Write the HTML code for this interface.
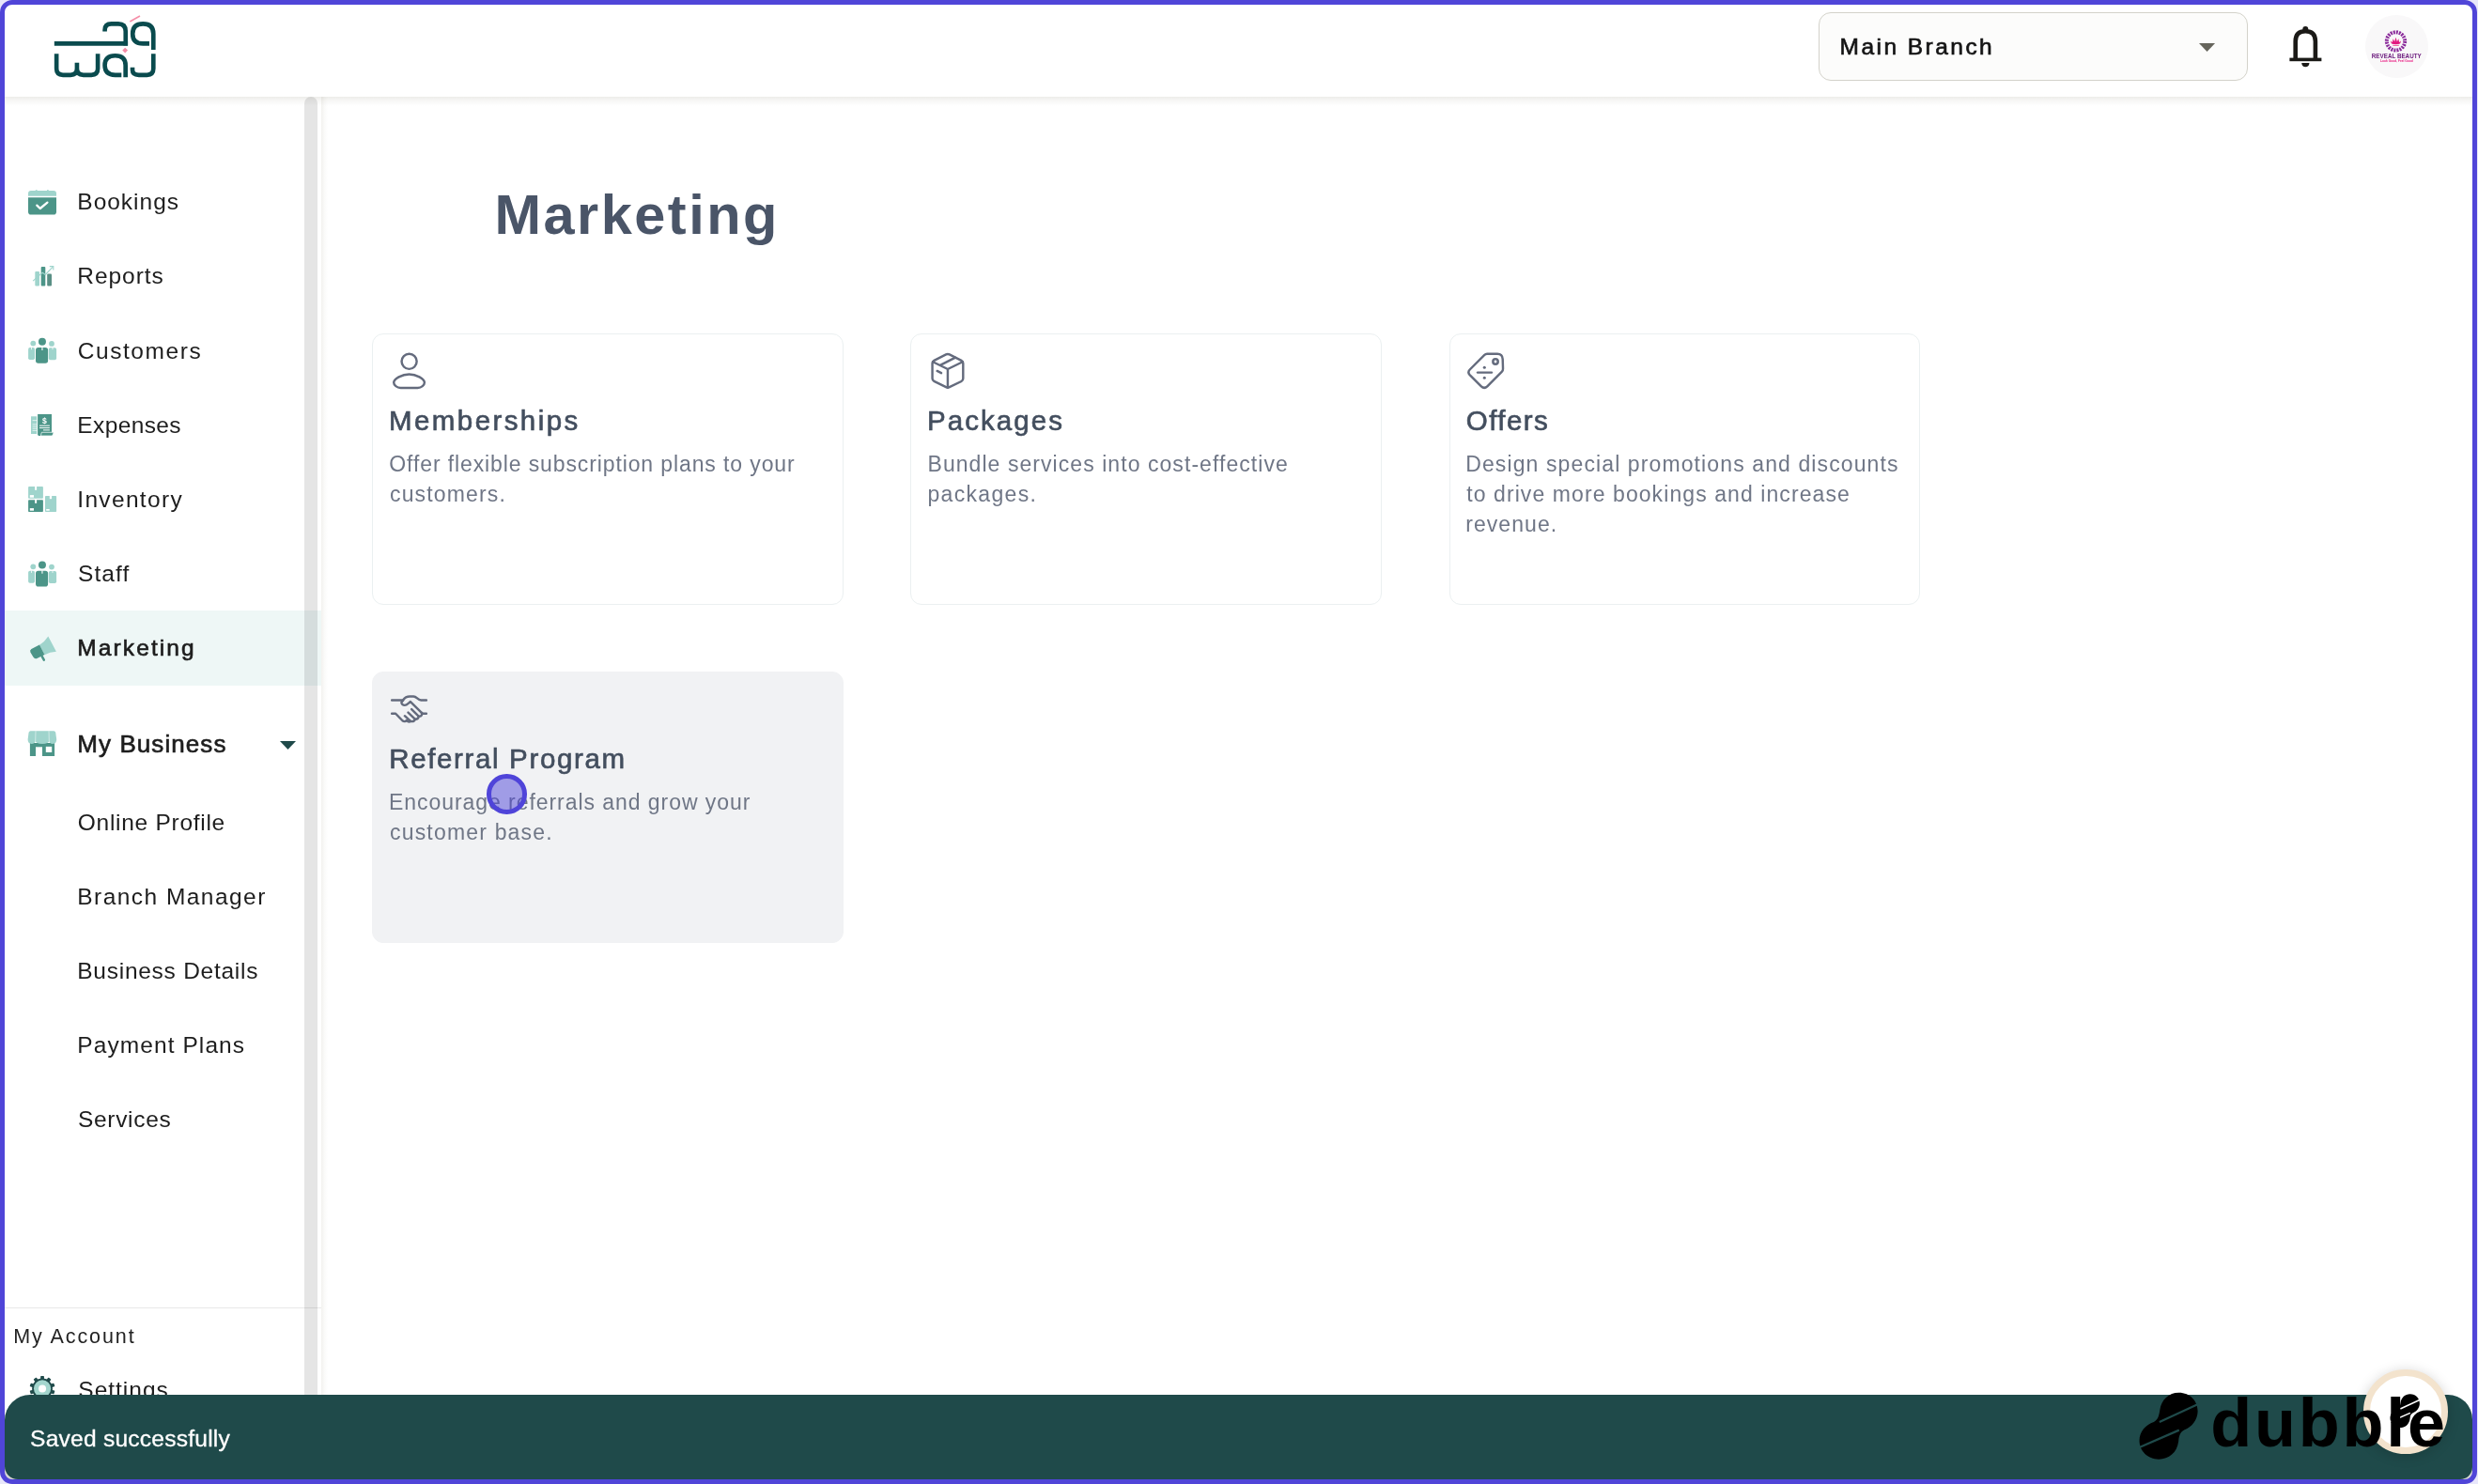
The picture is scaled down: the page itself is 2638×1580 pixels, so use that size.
<!DOCTYPE html>
<html lang="en"><head><meta charset="utf-8"><title>Marketing</title>
<style>
*{box-sizing:border-box;margin:0;padding:0}
html,body{width:2638px;height:1580px;overflow:hidden;background:#e8e7fa}
body{position:relative;font-family:"Liberation Sans",sans-serif}
.abs{position:absolute}
.t{position:absolute;white-space:pre;line-height:1;font-family:"Liberation Sans",sans-serif}
#page{position:absolute;left:0;top:0;width:2637px;height:1580px;background:#fff;border-radius:13px;overflow:hidden}
#frame{position:absolute;left:0;top:0;width:2637px;height:1580px;border:5px solid #5045d8;border-radius:13px;z-index:100;pointer-events:none}
#header{position:absolute;left:0;top:0;width:2638px;height:103px;background:#fff;z-index:20}
#hshadow{position:absolute;left:0;top:103px;width:2638px;height:10px;background:linear-gradient(rgba(45,40,10,.085),rgba(45,40,10,.035) 45%,rgba(45,40,10,0));z-index:19}
#sbshadow{position:absolute;left:342px;top:103px;width:7px;height:1477px;background:linear-gradient(90deg,#f3f2ef,#fbfbfa 55%,#fff);z-index:5}
#sidebar{position:absolute;left:0;top:103px;width:342px;height:1477px;background:#fff;z-index:6}
#hl{position:absolute;left:0;top:650px;width:342px;height:79.5px;background:#eef7f6;z-index:7}
#thumb{position:absolute;left:324px;top:103px;width:14px;height:1400px;background:rgba(0,0,0,.102);border-radius:7px 7px 0 0;z-index:30}
#divider{position:absolute;left:0;top:1391.5px;width:342px;height:1.5px;background:#e8e8e8;z-index:8}
.card{position:absolute;width:501px;height:289px;border:1px solid #ebf0f1;border-radius:12px;background:#fff}
.card.hover{background:#f1f2f4;border-color:#f1f2f4}
#select{position:absolute;left:1936px;top:13px;width:457px;height:72.5px;border:1.3px solid #d3d2ca;border-radius:13px;background:#fcfcfb;z-index:21}
#avatar{position:absolute;left:2518px;top:16px;width:67px;height:67px;border-radius:50%;background:#f9f8f9;z-index:21}
#toast{position:absolute;left:5px;top:1485px;width:2627px;height:90px;background:#1f4a4a;border-radius:27px 26px 13px 14px;z-index:40}
#fab{position:absolute;left:2516px;top:1458px;width:89.5px;height:89.5px;border-radius:50%;background:#fff;border:7px solid #f3e3cd;box-shadow:0 2px 14px rgba(0,0,0,.18);z-index:41}
#cursor{position:absolute;left:518.2px;top:824.2px;width:42.6px;height:42.6px;border-radius:50%;background:rgba(80,69,216,.5);border:5px solid #4f44d9;z-index:35}
svg{position:absolute;overflow:visible}
.wedge{position:absolute;top:1559px;width:16px;height:16px;background:#d9d9d4;z-index:39}

</style></head>
<body>
<div id="page">
<div id="header"></div>
<div id="hshadow"></div>
<div id="sbshadow"></div>
<div id="sidebar"></div>
<div id="hl"></div>
<div id="divider"></div>
<div id="thumb"></div>
<div id="select"></div>
<div id="avatar"></div>
<div class="card" style="left:396px;top:355px;width:502px"></div>
<div class="card" style="left:969px;top:355px;width:502px"></div>
<div class="card" style="left:1543px;top:355px"></div>
<div class="card hover" style="left:396px;top:715px;width:502px"></div>
<!-- LOGO -->
<svg style="left:0;top:0;z-index:23" width="240" height="110" viewBox="0 0 240 110" role="img" aria-label="waj وجـ logo"><title>waj وجـ</title>
<g transform="scale(0.096852)" fill="none" stroke="#0a4b4e" stroke-width="48" stroke-linecap="butt" stroke-linejoin="round">
<path d="M597,479 H1405"/>
<path d="M1152,347 V330 Q1152,262 1225,262 H1300 Q1381,262 1381,345 V500"/>
<path d="M1642,479 H1572 Q1458,479 1458,371 Q1458,262 1572,262 Q1686,262 1686,371 V546"/>
<path d="M621,590 V755 Q621,824 692,824 H775 Q846,824 846,755 V690 M846,755 Q846,824 917,824 H1004 Q1075,824 1075,755 V590"/>
<path d="M1335,824 H1266 Q1152,824 1152,718 Q1152,612 1266,612 Q1380,612 1380,718 V848"/>
<path d="M1686,590 V755 Q1686,824 1616,824 H1526 Q1456,824 1456,770 V740"/>
<path d="M1428,238 L1538,176" stroke="#f58ea8" stroke-width="17"/>
<path d="M1375,523 L1405,553 L1375,583 L1345,553 Z" fill="#f58ea8" stroke="none"/>
</g></svg>

<!-- SIDEBAR ICONS -->
<svg style="left:0;top:0;z-index:23" width="70" height="1580" viewBox="0 0 70 1580">
<!-- calendar -->
<g>
<path d="M30,208.7 V206 Q30,203 33,203 H57 Q60,203 60,206 V208.7 Z" fill="#9fd4cc"/>
<rect x="37.8" y="202.2" width="1.8" height="1.5" fill="#9fd4cc"/><rect x="50" y="202.2" width="1.8" height="1.5" fill="#9fd4cc"/>
<path d="M30,210.2 H60 V225.5 Q60,228.6 57,228.6 H33 Q30,228.6 30,225.5 Z" fill="#4c9588"/>
<path d="M39.3,218.6 L42.7,222 L50.4,215.6" fill="none" stroke="#fff" stroke-width="2.3" stroke-linecap="round" stroke-linejoin="round"/>
</g>
<!-- reports -->
<g>
<rect x="37.3" y="289" width="4.7" height="15.4" rx="1" fill="#9fd4cc"/>
<rect x="43.7" y="283.9" width="4.6" height="20.5" rx="1" fill="#4c9588"/>
<rect x="50.2" y="291.6" width="4.8" height="12.8" rx="1" fill="#5a8f85"/>
<path d="M35.1,299.1 L45.2,290.3 L48.3,292.5 L56,284.4" fill="none" stroke="#9fd4cc" stroke-width="1.1"/>
<path d="M52.8,283.6 H56.8 V287.6" fill="none" stroke="#9fd4cc" stroke-width="1.1"/>
</g>
<!-- customers (people) -->
<g>
<circle cx="35.3" cy="365.6" r="2.9" fill="#9fd4cc"/><circle cx="55" cy="365.9" r="2.9" fill="#9fd4cc"/>
<rect x="30.1" y="370.1" width="6.9" height="12.9" rx="1.8" fill="#9fd4cc"/>
<rect x="51.8" y="370.3" width="8.3" height="13" rx="1.8" fill="#9fd4cc"/>
<circle cx="44.95" cy="363.8" r="4" fill="#4c9588"/>
<rect x="38" y="370" width="13.1" height="16.8" rx="2.8" fill="#4c9588"/>
<rect x="44.4" y="369.6" width="1.1" height="3.4" fill="#fff"/>
<rect x="33.1" y="369.8" width=".8" height="2.4" fill="#fff"/><rect x="55.6" y="369.8" width=".8" height="2.4" fill="#fff"/>
</g>
<!-- expenses -->
<g>
<rect x="33" y="443.3" width="6.2" height="18.7" fill="#9fd4cc"/>
<path d="M34.6,447.6 H39.2 M34.6,451.8 H39.2 M34.6,454 H39.2 M34.6,456.2 H39.2 M34.6,458.4 H39.2" stroke="#fff" stroke-width=".9" opacity=".75"/>
<path d="M40.1,441.1 H55 V463.9 H41.5 Q40.1,463.9 40.1,462.5 Z" fill="#4c9588"/>
<path d="M42,453.2 H52.9 M42,455.6 H52.9 M46,457.9 H52.9" stroke="#fff" stroke-width="1"/>
<text x="47.45" y="450.7" font-family="'Liberation Sans',sans-serif" font-weight="700" font-size="8.6" fill="#fff" text-anchor="middle">$</text>
<path d="M43.4,464 L44.3,460.3 H57.2 L56.2,463 Q55.9,464 54.9,464 Z" fill="#4c9588" stroke="#fff" stroke-width=".7"/>
</g>
<!-- inventory -->
<g>
<rect x="30.1" y="518.1" width="15.8" height="12.7" rx=".8" fill="#9fd4cc"/>
<rect x="37.1" y="517.9" width="2" height="3.9" fill="#fff"/><rect x="31.8" y="527.1" width="4.2" height="2.6" fill="#fff"/>
<rect x="30.1" y="532.2" width="15.8" height="12.8" rx=".8" fill="#4c9588"/>
<rect x="37.1" y="532" width="2" height="3.8" fill="#fff"/><rect x="31.8" y="541.1" width="4.2" height="2.6" fill="#fff"/>
<rect x="48" y="528" width="12.1" height="17" rx=".8" fill="#9fd4cc"/>
<rect x="52.8" y="527.8" width="2.3" height="3.4" fill="#fff"/><rect x="49.2" y="542" width="3.5" height="1.7" fill="#fff"/>
</g>
<!-- staff -->
<g transform="translate(0,237.7)">
<circle cx="35.3" cy="365.6" r="2.9" fill="#9fd4cc"/><circle cx="55" cy="365.9" r="2.9" fill="#9fd4cc"/>
<rect x="30.1" y="370.1" width="6.9" height="12.9" rx="1.8" fill="#9fd4cc"/>
<rect x="51.8" y="370.3" width="8.3" height="13" rx="1.8" fill="#9fd4cc"/>
<circle cx="44.95" cy="363.8" r="4" fill="#4c9588"/>
<rect x="38" y="370" width="13.1" height="16.8" rx="2.8" fill="#4c9588"/>
<rect x="44.4" y="369.6" width="1.1" height="3.4" fill="#fff"/>
<rect x="33.1" y="369.8" width=".8" height="2.4" fill="#fff"/><rect x="55.6" y="369.8" width=".8" height="2.4" fill="#fff"/>
</g>
<!-- marketing -->
<g>
<path d="M42,686.7 Q47.8,683.3 51.3,677.6 L59.9,693.8 Q53,694.3 47.3,697.2 Z" fill="#9fd4cc"/>
<path d="M33.4,690.9 L42,686.5 L47.4,697.1 L39.4,700.9 Q36.8,701.9 35.4,699.5 L32.4,694.4 Q31.4,692 33.4,690.9 Z" fill="#4c9588"/>
<path d="M44.6,698.6 L46.8,702.6" stroke="#4c9588" stroke-width="2.5" stroke-linecap="round"/>
</g>
<!-- my business -->
<g>
<path d="M31.9,791 H58.1 V805 H31.9 Z" fill="#4c9588"/>
<rect x="38" y="795.3" width="7" height="9.9" fill="#fff"/>
<rect x="48.8" y="794.9" width="6.4" height="6.1" fill="#fff"/>
<path d="M32.5,778.2 H57.3 Q58.8,778.2 59.2,779.8 L60.2,787.3 Q60.2,791.9 56.2,791.9 Q52.6,791.9 52.3,788.8 Q52,791.9 45,791.9 Q38,791.9 37.7,788.8 Q37.4,791.9 33.6,791.9 Q29.6,791.9 29.6,787.3 L30.6,779.8 Q31,778.2 32.5,778.2 Z" fill="#9fd4cc"/>
<path d="M38,778.2 L37.7,789 M52,778.2 L52.3,789" stroke="#fff" stroke-width=".6" opacity=".85"/>
</g>
<!-- gear -->
<g transform="translate(45.05,1478.45)">
<g fill="#1f4a4a"><circle r="10.9"/><rect x="-1.9" y="-13.5" width="3.8" height="4.5" rx=".7" transform="rotate(0)"/><rect x="-1.9" y="-13.5" width="3.8" height="4.5" rx=".7" transform="rotate(36)"/><rect x="-1.9" y="-13.5" width="3.8" height="4.5" rx=".7" transform="rotate(72)"/><rect x="-1.9" y="-13.5" width="3.8" height="4.5" rx=".7" transform="rotate(108)"/><rect x="-1.9" y="-13.5" width="3.8" height="4.5" rx=".7" transform="rotate(144)"/><rect x="-1.9" y="-13.5" width="3.8" height="4.5" rx=".7" transform="rotate(180)"/><rect x="-1.9" y="-13.5" width="3.8" height="4.5" rx=".7" transform="rotate(216)"/><rect x="-1.9" y="-13.5" width="3.8" height="4.5" rx=".7" transform="rotate(252)"/><rect x="-1.9" y="-13.5" width="3.8" height="4.5" rx=".7" transform="rotate(288)"/><rect x="-1.9" y="-13.5" width="3.8" height="4.5" rx=".7" transform="rotate(324)"/></g>
<circle r="9.1" fill="#a3d6ce"/>
<circle r="4" fill="#fff"/>
</g>
</svg>
<!-- my business arrow -->
<svg style="left:297.6px;top:788.8px;z-index:23" width="17" height="9" viewBox="0 0 17 9"><path d="M0,0 H17 L8.5,9 Z" fill="#1f4a4a"/></svg>
<!-- select arrow -->
<svg style="left:2340.6px;top:45.6px;z-index:23" width="17.1" height="9" viewBox="0 0 17.1 9"><path d="M0,0 H17.1 L8.55,9 Z" fill="#66655c"/></svg>
<!-- bell -->
<svg style="left:2430px;top:20px;z-index:23" width="50" height="60" viewBox="2430 20 50 60">
<path d="M2443.7,63.3 V44 Q2443.7,33.3 2454.3,33.3 Q2464.9,33.3 2464.9,44 V63.3" fill="none" stroke="#1b1a17" stroke-width="4.6"/>
<rect x="2437.4" y="61.6" width="34" height="3.6" fill="#1b1a17"/>
<circle cx="2454.3" cy="31" r="3" fill="#1b1a17"/>
<path d="M2450.2,66.9 H2458.5 Q2458,71.2 2454.35,71.2 Q2450.7,71.2 2450.2,66.9 Z" fill="#1b1a17"/>
</svg>
<!-- avatar logo -->
<svg style="left:2518px;top:16px;z-index:23;will-change:transform" width="67" height="67" viewBox="2518 16 67 67">
<circle cx="2550.5" cy="43.9" r="9.7" fill="none" stroke="#8a2a9a" stroke-width="4" stroke-dasharray="2 1.05"/>
<circle cx="2550.5" cy="43.9" r="11.9" fill="none" stroke="#f9f8f9" stroke-width=".7" stroke-dasharray="1 2.1"/>
<g fill="#e2187f">
<path d="M2550.5,39.8 L2552.5,46.6 L2548.5,46.6 Z"/>
<path d="M2547.6,41.2 L2550.4,46.7 L2546.7,46.3 Z"/><path d="M2553.4,41.2 L2550.6,46.7 L2554.3,46.3 Z"/>
<path d="M2544.9,43.5 L2549.2,46.8 L2546,46.6 Z"/><path d="M2556.1,43.5 L2551.8,46.8 L2555,46.6 Z"/>
<path d="M2545.2,45.2 Q2550.5,49.2 2555.8,45.2 Q2550.5,47 2545.2,45.2 Z"/>
</g>
<rect x="2547.3" y="47.7" width="6.6" height="1.3" rx=".4" fill="#ee6aa9"/>
<text x="2551.25" y="62" font-family="'Liberation Sans',sans-serif" font-size="7.3" font-weight="700" fill="#6f2080" text-anchor="middle" textLength="52.9" lengthAdjust="spacingAndGlyphs">REVEAL BEAUTY</text>
<text x="2551.4" y="66" font-family="'Liberation Sans',sans-serif" font-size="3.6" font-weight="700" fill="#e8177f" text-anchor="middle" textLength="34.8" lengthAdjust="spacingAndGlyphs">Look Good, Feel Good</text>
</svg>

<!-- CARD ICONS -->
<svg style="left:0;top:0;z-index:23" width="2100" height="800" viewBox="0 0 2100 800" fill="none" stroke="#646b7d" stroke-width="2.45" stroke-linecap="round" stroke-linejoin="round">
<!-- user -->
<circle cx="435.6" cy="384.8" r="8.05"/>
<path d="M435.6,398.4 C428,398.4 419.2,403.5 419.2,407.3 C419.2,410 422.5,412.9 426.5,412.9 H444.7 C448.7,412.9 451.9,410 451.9,407.3 C451.9,403.5 443,398.4 435.6,398.4 Z"/>
<!-- package -->
<g transform="translate(978,365) scale(0.040432)" stroke-width="60">
<path d="M720,308 Q765,285 810,308 L1125,467 Q1170,490 1170,540 V940 Q1170,990 1125,1013 L810,1167 Q765,1190 720,1167 L405,1013 Q360,990 360,940 V540 Q360,490 405,467 Z"/>
<path d="M372,500 L765,692 L1158,500 M765,692 V1180 M565,592 L967,388 M485,740 L595,795"/>
</g>
<!-- tag -->
<g transform="translate(1552,365) scale(0.040432)" stroke-width="60">
<path d="M770,292 H1040 Q1172,292 1180,430 L1188,680 Q1190,730 1155,765 L775,1145 Q695,1222 615,1145 L312,842 Q248,775 315,705 L695,325 Q728,292 770,292 Z"/>
<circle cx="990" cy="495" r="66" stroke-width="62"/>
<path d="M520,782 H890"/>
<circle cx="700" cy="650" r="38" fill="#646b7d" stroke="none"/><circle cx="700" cy="920" r="38" fill="#646b7d" stroke="none"/>
</g>
<!-- handshake -->
<g transform="translate(405,725) scale(0.040432)" stroke-width="60">
<path d="M300,505 H590 C640,440 690,408 770,408 H870 C960,408 975,505 1070,505 H1210"/>
<path d="M600,505 L555,560 C545,600 590,640 640,640 C690,640 720,600 790,545 L1085,840"/>
<path d="M820,745 L1000,925 M730,830 L910,1005 M640,920 L795,1060"/>
<path d="M300,860 H400 L580,1045 Q615,1075 660,1062 L690,1040"/>
<path d="M1210,860 H1130 L1085,840 C1110,900 1060,935 1010,930 C1000,985 960,1010 915,1005 C900,1050 850,1075 795,1062 C760,1085 720,1075 690,1040"/>
</g>
</svg>

<div id="texts" style="position:absolute;left:0;top:0;z-index:22;will-change:transform">
<span class="t" style="left:82.30px;top:201.00px;font-size:24.5px;line-height:27px;font-weight:400;color:#1d1d1d;letter-spacing:0.995px;">Bookings</span>
<span class="t" style="left:82.30px;top:280.00px;font-size:24.5px;line-height:27px;font-weight:400;color:#1d1d1d;letter-spacing:0.944px;">Reports</span>
<span class="t" style="left:82.70px;top:360.00px;font-size:24.5px;line-height:27px;font-weight:400;color:#1d1d1d;letter-spacing:1.576px;">Customers</span>
<span class="t" style="left:82.30px;top:439.00px;font-size:24.5px;line-height:27px;font-weight:400;color:#1d1d1d;letter-spacing:0.379px;">Expenses</span>
<span class="t" style="left:82.30px;top:518.00px;font-size:24.5px;line-height:27px;font-weight:400;color:#1d1d1d;letter-spacing:1.322px;">Inventory</span>
<span class="t" style="left:83.00px;top:597.00px;font-size:24.5px;line-height:27px;font-weight:400;color:#1d1d1d;letter-spacing:1.065px;">Staff</span>
<span class="t" style="left:82.30px;top:676.00px;font-size:24.5px;line-height:27px;font-weight:400;color:#1d1d1d;letter-spacing:2.107px;-webkit-text-stroke:0.65px #1d1d1d;">Marketing</span>
<span class="t" style="left:82.30px;top:777.00px;font-size:26px;line-height:30px;font-weight:400;color:#1d1d1d;letter-spacing:1.072px;-webkit-text-stroke:0.65px #1d1d1d;">My Business</span>
<span class="t" style="left:82.80px;top:862.00px;font-size:24.5px;line-height:27px;font-weight:400;color:#1d1d1d;letter-spacing:0.72px;">Online Profile</span>
<span class="t" style="left:82.30px;top:941.00px;font-size:24.5px;line-height:27px;font-weight:400;color:#1d1d1d;letter-spacing:1.456px;">Branch Manager</span>
<span class="t" style="left:82.30px;top:1020.00px;font-size:24.5px;line-height:27px;font-weight:400;color:#1d1d1d;letter-spacing:0.736px;">Business Details</span>
<span class="t" style="left:82.30px;top:1099.00px;font-size:24.5px;line-height:27px;font-weight:400;color:#1d1d1d;letter-spacing:1.081px;">Payment Plans</span>
<span class="t" style="left:83.00px;top:1178.00px;font-size:24.5px;line-height:27px;font-weight:400;color:#1d1d1d;letter-spacing:0.686px;">Services</span>
<span class="t" style="left:14.30px;top:1411.00px;font-size:21.5px;line-height:24px;font-weight:400;color:#222;letter-spacing:1.917px;">My Account</span>
<span class="t" style="left:83.30px;top:1466.00px;font-size:24.5px;line-height:27px;font-weight:400;color:#1d1d1d;letter-spacing:0.989px;">Settings</span>
<span class="t" style="left:1958.60px;top:36.00px;font-size:24.5px;line-height:27px;font-weight:400;color:#141414;letter-spacing:2.459px;-webkit-text-stroke:0.65px #141414;">Main Branch</span>
<span class="t" style="left:526.40px;top:195.00px;font-size:59.5px;line-height:67px;font-weight:700;color:#4a5568;letter-spacing:2.49px;">Marketing</span>
<span class="t" style="left:414.00px;top:431.00px;font-size:29.5px;line-height:33px;font-weight:400;color:#434e5e;letter-spacing:2.419px;-webkit-text-stroke:0.65px #434e5e;">Memberships</span>
<span class="t" style="left:414.30px;top:481.00px;font-size:23px;line-height:26px;font-weight:400;color:#6f7686;letter-spacing:0.887px;">Offer flexible subscription plans to your</span>
<span class="t" style="left:415.00px;top:513.00px;font-size:23px;line-height:26px;font-weight:400;color:#6f7686;letter-spacing:1.157px;">customers.</span>
<span class="t" style="left:987.00px;top:431.00px;font-size:29.5px;line-height:33px;font-weight:400;color:#434e5e;letter-spacing:2.071px;-webkit-text-stroke:0.65px #434e5e;">Packages</span>
<span class="t" style="left:987.50px;top:481.00px;font-size:23px;line-height:26px;font-weight:400;color:#6f7686;letter-spacing:1.059px;">Bundle services into cost-effective</span>
<span class="t" style="left:987.50px;top:513.00px;font-size:23px;line-height:26px;font-weight:400;color:#6f7686;letter-spacing:1.318px;">packages.</span>
<span class="t" style="left:1560.75px;top:431.00px;font-size:29.5px;line-height:33px;font-weight:400;color:#434e5e;letter-spacing:1.443px;-webkit-text-stroke:0.65px #434e5e;">Offers</span>
<span class="t" style="left:1560.25px;top:481.00px;font-size:23px;line-height:26px;font-weight:400;color:#6f7686;letter-spacing:1.11px;">Design special promotions and discounts</span>
<span class="t" style="left:1561.25px;top:513.00px;font-size:23px;line-height:26px;font-weight:400;color:#6f7686;letter-spacing:1.082px;">to drive more bookings and increase</span>
<span class="t" style="left:1560.25px;top:545.00px;font-size:23px;line-height:26px;font-weight:400;color:#6f7686;letter-spacing:1.055px;">revenue.</span>
<span class="t" style="left:414.20px;top:791.00px;font-size:29.5px;line-height:33px;font-weight:400;color:#434e5e;letter-spacing:1.643px;-webkit-text-stroke:0.65px #434e5e;">Referral Program</span>
<span class="t" style="left:414.00px;top:841.00px;font-size:23px;line-height:26px;font-weight:400;color:#6f7686;letter-spacing:0.946px;">Encourage referrals and grow your</span>
<span class="t" style="left:415.00px;top:873.00px;font-size:23px;line-height:26px;font-weight:400;color:#6f7686;letter-spacing:1.185px;">customer base.</span>
</div>
<div id="cursor"></div>
<div class="wedge" style="left:5px"></div><div class="wedge" style="left:2616px"></div>
<div id="toast"></div>
<div id="fab"></div>
<svg style="left:0;top:0;z-index:42" width="2638" height="1580" viewBox="0 0 2638 1580">
<g transform="translate(2544.5,1484.2) scale(0.0771) translate(-115,-280)">
<path d="M390,280 C470,280 522,340 522,410 C522,470 480,520 430,540 C400,555 392,580 388,620 C378,700 320,745 250,745 C175,745 115,690 115,615 C115,550 160,505 215,485 C245,470 252,440 258,400 C268,330 320,280 390,280 Z" fill="#000"/>
<path d="M255,484.6 L535,355.8 M100,668.7 L392,542" stroke="#fff" stroke-width="20"/>
</g>
</svg>

<div id="over" style="position:absolute;left:0;top:0;z-index:50;will-change:transform">
<span class="t" style="left:32.10px;top:1518.00px;font-size:24.6px;line-height:27px;font-weight:400;color:#ffffff;letter-spacing:0.209px;-webkit-text-stroke:0.3px #ffffff;">Saved successfully</span>
<span class="t" style="left:2353.30px;top:1475.00px;font-size:72px;line-height:80px;font-weight:700;color:#000000;letter-spacing:2.735px;">dubble</span>
<svg style="left:0;top:0" width="2638" height="1580" viewBox="0 0 2638 1580">
<!-- dubble peanut: coordinates in zoom space (scale 6.556, origin 2260,1440) -->
<g transform="translate(2260,1440) scale(0.15253)">
<defs><clipPath id="pc"><path d="M-100,-100 H900 V900 H-100 Z M251.9,477.8 L531.9,349 L538.1,362.6 L258.1,491.4 Z M97,661.8 L389,535.1 L395,548.9 L103,675.6 Z" clip-rule="evenodd"/></clipPath></defs>
<g clip-path="url(#pc)">
<path d="M390,280 C470,280 522,340 522,410 C522,470 480,520 430,540 C400,555 392,580 388,620 C378,700 320,745 250,745 C175,745 115,690 115,615 C115,550 160,505 215,485 C245,470 252,440 258,400 C268,330 320,280 390,280 Z" fill="#000"/>
</g>
</g>
</svg>

</div>
</div>
<div id="frame"></div>

</body></html>
